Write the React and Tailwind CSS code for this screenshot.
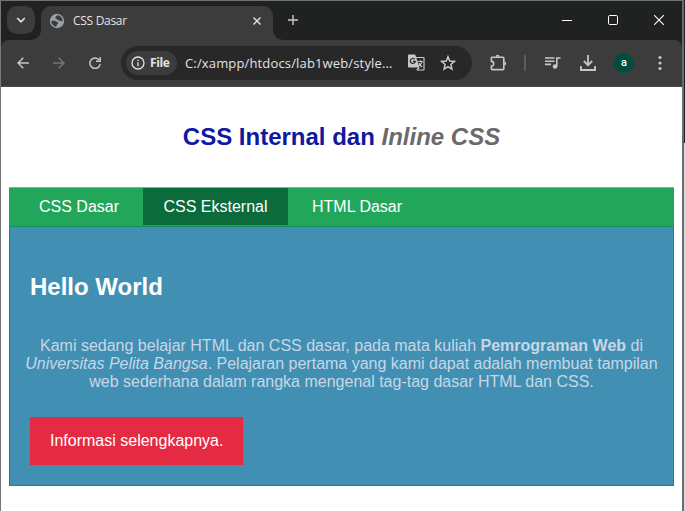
import React from "react";

function TabStrip() {
  return (
    <div className="flex h-[39px] items-start">
      <div className="ml-[6px] mt-[5px] flex h-7 w-7 items-center justify-center rounded-[10px] bg-[#3c3c3c]">
        <svg width="10" height="10" viewBox="0 0 10 10" fill="none" stroke="#e3e3e3" strokeWidth="1.7">
          <path d="M1.2 3 5 6.8 8.8 3" />
        </svg>
      </div>
      <div className="relative ml-[6px] mt-[5px] flex h-[34px] w-[232px] items-center rounded-t-[10px] bg-[#3c3c3c] pb-[5px]">
        <svg className="absolute -left-[10px] bottom-0" width="10" height="10" viewBox="0 0 10 10" fill="#3c3c3c">
          <path d="M10 0v10H0A10 10 0 0 0 10 0Z" />
        </svg>
        <svg className="absolute -right-[10px] bottom-0" width="10" height="10" viewBox="0 0 10 10" fill="#3c3c3c">
          <path d="M0 0v10h10A10 10 0 0 1 0 0Z" />
        </svg>
        <svg className="ml-2" width="16" height="16" viewBox="0 0 16 16">
          <circle cx="8" cy="8" r="7.2" fill="#9aa0a6" />
          <path
            d="M9.3 2.2C7.6 2.4 6.6 3.2 6.4 4.2c-.2 1 .5 1.600 1.500 1.600.3 1.300 1.200 1.800 2.400 1.700 1.300 0 1.700 1 3.400.7C13.800 5.300 12 2.800 9.300 2.200ZM2.200 8c1.500-.3 3.300-.2 4.700.3 1 .4 1.200 1.300 2.500 1.400-.1 1.500-1.500 1.400-1.700 2.300-.1.700-.3 1.200-.6 1.800C4.300 13.300 2.300 11 2.200 8Z"
            fill="#3c3c3c"
          />
        </svg>
        <span className="ml-2 whitespace-nowrap font-['Open_Sans',sans-serif] text-[12px] leading-4 tracking-[-0.3px] text-[#e3e3e3]">
          CSS Dasar
        </span>
        <svg className="ml-auto mr-[12px]" width="8" height="8" viewBox="0 0 8 8" stroke="#e3e3e3" strokeWidth="1.4">
          <path d="M.5.5l7 7M7.5.5l-7 7" />
        </svg>
      </div>
      <svg className="ml-[15px] mt-[14px]" width="10" height="10" viewBox="0 0 10 10" stroke="#c7c7c7" strokeWidth="1.4">
        <path d="M5 0v10M0 5h10" />
      </svg>
      <div className="ml-auto mr-[18px] mt-[14px] flex items-center gap-[36px]">
        <svg width="10" height="10" viewBox="0 0 10 10" stroke="#fff" strokeWidth="1">
          <path d="M0 5.5h10" />
        </svg>
        <svg width="10" height="10" viewBox="0 0 10 10" fill="none" stroke="#fff">
          <rect x=".5" y=".5" width="9" height="9" rx="1.2" />
        </svg>
        <svg width="10" height="10" viewBox="0 0 10 10" stroke="#fff" strokeWidth="1.1">
          <path d="M0 0l10 10M10 0 0 10" />
        </svg>
      </div>
    </div>
  );
}

function Toolbar() {
  return (
    <div className="flex h-[47px] items-center rounded-t-[8px] border-b border-[#4a4a4a] bg-[#3c3c3c]">
      <svg className="ml-4" width="12" height="12" viewBox="0 0 12 12" fill="none" stroke="#c7c7c7" strokeWidth="1.5">
        <path d="M12 6H1M6.3.7 1 6l5.3 5.3" />
      </svg>
      <svg className="ml-6" width="12" height="12" viewBox="0 0 12 12" fill="none" stroke="#757575" strokeWidth="1.5">
        <path d="M0 6h11M5.7.7 11 6l-5.3 5.3" />
      </svg>
      <svg className="ml-6" width="12" height="12" viewBox="0 0 12 12" fill="none" stroke="#c7c7c7" strokeWidth="1.5">
        <path d="M10.3 3.2A5.2 5.2 0 1 0 11.2 7" />
        <path d="M11.2 0v4.3H7" />
      </svg>

      <div className="ml-5 flex h-[34px] w-[351px] items-center rounded-full bg-[#282828]">
        <div className="ml-[5px] flex h-6 w-[51px] items-center rounded-full bg-[#3c3c3c]">
          <svg className="ml-[5px]" width="14" height="14" viewBox="0 0 14 14" fill="none" stroke="#e3e3e3" strokeWidth="1.3">
            <circle cx="7" cy="7" r="6" />
            <path d="M7 6.3v4M7 3.7v1.4" />
          </svg>
          <span className="ml-[5px] font-['Open_Sans',sans-serif] text-[12px] font-bold leading-4 tracking-[-0.4px] text-[#e3e3e3]">
            File
          </span>
        </div>
        <span className="ml-2 w-[222px] whitespace-nowrap font-['Open_Sans',sans-serif] text-[13px] leading-5 tracking-[0.15px] text-[#e3e3e3]">
          C:/xampp/htdocs/lab1web/style...
        </span>
        <svg className="mb-px ml-px" width="17" height="17" viewBox="0 0 17 17" fill="none">
          <path d="M7 3.500h8.500a.5.5 0 0 1 .5.5v11.500a.5.5 0 0 1-.5.5H9" stroke="#c7c7c7" strokeWidth="1.200" />
          <path d="M1 .5h6.200L11.500 13.500H1a1 1 0 0 1-1-1V1.500a1 1 0 0 1 1-1Z" fill="#c7c7c7" />
          <path d="M6.600 5.200A2.500 2.500 0 1 0 7.300 7.300H5" stroke="#282828" strokeWidth="1.200" />
          <path d="M9.800 7.500h5M12.300 6.300v1.200M14 7.500c-.4 2-1.500 3.300-3 4.300M11 9c.7 1.700 1.700 3 3.200 4M8.700 16l2.600-2.500" stroke="#c7c7c7" strokeWidth="1.200" />
        </svg>
        <svg className="ml-[15px]" width="16" height="16" viewBox="0 0 16 16" fill="none" stroke="#c7c7c7" strokeWidth="1.5">
          <path d="M8 1.700 9.700 6l4.700.4-3.500 3.100 1 4.600L8 11.700l-3.900 2.400 1-4.600L1.600 6.400 6.300 6Z" />
        </svg>
      </div>

      <svg className="mb-[2px] ml-[18px]" width="17" height="17" viewBox="0 0 17 17">
        <path
          d="M2.2 3.2H13a.8.8 0 0 1 .8.8v10.800a.8.8 0 0 1-.8.8H2.200a.8.8 0 0 1-.8-.8V12a2.200 2.200 0 0 0 0-4.600V4a.8.8 0 0 1 .8-.8Z"
          fill="none"
          stroke="#c7c7c7"
          strokeWidth="1.6"
        />
        <path d="M5.700 2.800a2 2 0 0 1 4 0ZM14.200 7.400a2 2 0 0 1 0 4Z" fill="#c7c7c7" />
      </svg>
      <div className="ml-[17px] h-4 w-[2px] bg-[#5c5c5c]" />
      <svg className="ml-[19px]" width="16" height="12" viewBox="0 0 16 12" fill="none" stroke="#c7c7c7" strokeWidth="1.6">
        <path d="M0 1h9.500M0 4.200h9.500M0 7.400h6M11.800 9.500V1h3.700" />
        <circle cx="10" cy="9.500" r="2.300" fill="#c7c7c7" stroke="none" />
      </svg>
      <svg className="ml-[19px]" width="16" height="16" viewBox="0 0 16 16" fill="none" stroke="#c7c7c7" strokeWidth="1.8">
        <path d="M8 0v10M3.800 6 8 10.200 12.200 6M.900 11v4h14.200v-4" />
      </svg>
      <div className="ml-[18px] flex h-5 w-5 items-center justify-center rounded-full bg-[#004d40] pb-px font-[Roboto,sans-serif] text-[11px] font-medium leading-none text-white">
        a
      </div>
      <svg className="ml-[24px]" width="4" height="16" viewBox="0 0 4 16" fill="#c7c7c7">
        <circle cx="2" cy="2.500" r="1.600" />
        <circle cx="2" cy="8" r="1.600" />
        <circle cx="2" cy="13.500" r="1.600" />
      </svg>
    </div>
  );
}

function Page() {
  return (
    <div className="flex-1 bg-white px-2 font-['Liberation_Sans',Arial,sans-serif] text-[16px] leading-[18px]">
      <h1 className="h-[100px] whitespace-nowrap pt-9 text-center text-[24px] font-bold leading-7 text-[#0f189f]">
        CSS Internal dan <i className="text-[#6a6a6c]">Inline CSS</i>
      </h1>
      <nav className="flex h-[39px] border-t border-[#64b5d8] bg-[#22a75a] leading-[37px] text-white">
        <a className="h-[37px] w-[134px] pl-[30px]">CSS Dasar</a>
        <a className="h-[37px] w-[145px] bg-[#0b6b3a] text-center">CSS Eksternal</a>
        <a className="h-[37px] pl-6">HTML Dasar</a>
      </nav>
      <section className="h-[260px] border border-[#10905a] bg-[#4190b3]">
        <h2 className="pl-5 pt-[46px] text-[24px] font-bold leading-7 text-white">Hello World</h2>
        <p className="mt-[36px] whitespace-nowrap text-center text-[#c9d6e6]">
          Kami sedang belajar HTML dan CSS dasar, pada mata kuliah <b>Pemrograman Web</b> di
          <br />
          <i>Universitas Pelita Bangsa</i>. Pelajaran pertama yang kami dapat adalah membuat tampilan
          <br />
          web sederhana dalam rangka mengenal tag-tag dasar HTML dan CSS.
        </p>
        <a className="ml-5 mt-[26px] block h-12 w-[213px] bg-[#e42b43] pl-5 leading-[47px] text-white">
          Informasi selengkapnya.
        </a>
      </section>
    </div>
  );
}

export default function App() {
  return (
    <div className="flex h-[511px] w-[685px] overflow-hidden">
      <div className="flex w-[684px] flex-col border-l border-r-2 border-t border-l-[#777] border-r-[#6b6b6b] border-t-[#6e7371] bg-[#202221]">
        <TabStrip />
        <Toolbar />
        <Page />
      </div>
      <div className="flex w-px flex-col">
        <div className="h-[143px] bg-[#202221]" />
        <div className="flex-1 bg-[#dcdcdc]" />
      </div>
    </div>
  );
}
